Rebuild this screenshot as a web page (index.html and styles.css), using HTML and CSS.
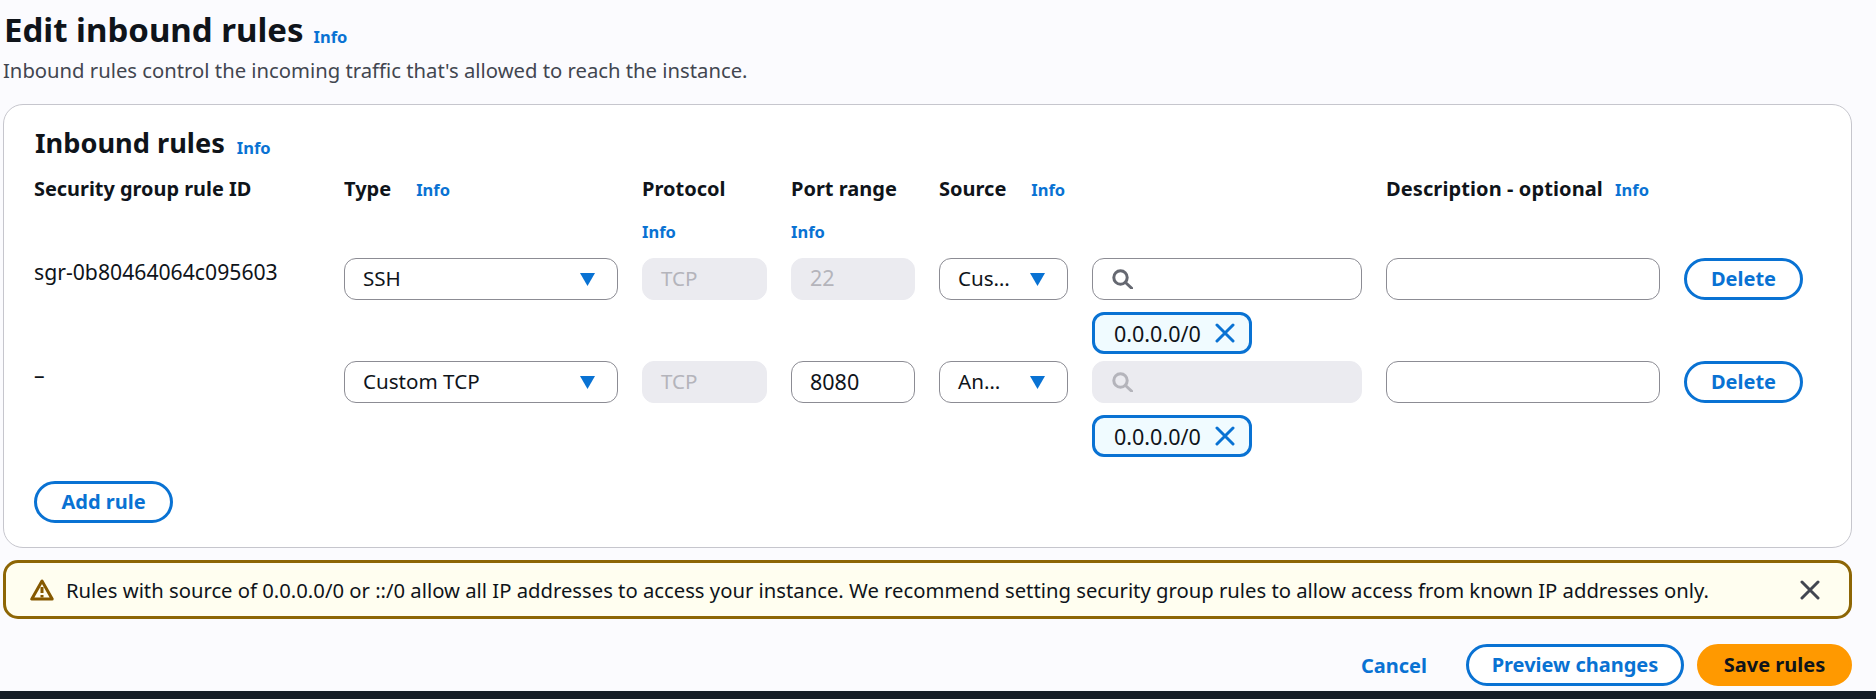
FILE: index.html
```html
<!DOCTYPE html>
<html lang="en">
<head>
<meta charset="utf-8">
<title>Edit inbound rules</title>
<link rel="stylesheet" href="styles.css">
</head>
<body>
<div class="page">
  <header class="page-head">
    <div class="title-row"><h1 class="title">Edit inbound rules</h1><a class="info info-title">Info</a></div>
    <p class="subtitle">Inbound rules control the incoming traffic that's allowed to reach the instance.</p>
  </header>

  <section class="card">
    <div class="card-head"><h2 class="card-title">Inbound rules</h2><a class="info info-card">Info</a></div>

    <div class="grid grid-head">
      <div class="label label-first">Security group rule ID</div>
      <div class="label label-wide"><span>Type</span><a class="info">Info</a></div>
      <div class="label"><span>Protocol</span><a class="info">Info</a></div>
      <div class="label"><span>Port range</span><a class="info">Info</a></div>
      <div class="label label-wide"><span>Source</span><a class="info">Info</a></div>
      <div></div>
      <div class="label label-narrow"><span>Description - optional</span><a class="info">Info</a></div>
      <div></div>
    </div>

    <div class="rows">
      <div class="grid">
        <div class="cell-text">sgr-0b80464064c095603</div>
        <div class="field select"><span class="field-text">SSH</span><svg class="caret" viewBox="0 0 14 12"><path d="M0 0h14L7 12z"/></svg></div>
        <div class="field disabled">TCP</div>
        <div class="field disabled num">22</div>
        <div class="field select"><span class="field-text">Cus…</span><svg class="caret" viewBox="0 0 14 12"><path d="M0 0h14L7 12z"/></svg></div>
        <div class="source">
          <div class="field search"><svg class="mag" viewBox="0 0 21 20"><circle cx="8.5" cy="8.5" r="6.7"/><path d="M13.5 13.5L20 19.5"/></svg></div>
          <div class="token"><span>0.0.0.0/0</span><svg class="x-blue" viewBox="0 0 20 20"><path d="M2 2l16 16M18 2L2 18"/></svg></div>
        </div>
        <div class="field"></div>
        <button class="btn">Delete</button>
      </div>

      <div class="grid">
        <div class="cell-text">–</div>
        <div class="field select"><span class="field-text">Custom TCP</span><svg class="caret" viewBox="0 0 14 12"><path d="M0 0h14L7 12z"/></svg></div>
        <div class="field disabled">TCP</div>
        <div class="field num">8080</div>
        <div class="field select"><span class="field-text">An…</span><svg class="caret" viewBox="0 0 14 12"><path d="M0 0h14L7 12z"/></svg></div>
        <div class="source">
          <div class="field search disabled"><svg class="mag" viewBox="0 0 21 20"><circle cx="8.5" cy="8.5" r="6.7"/><path d="M13.5 13.5L20 19.5"/></svg></div>
          <div class="token"><span>0.0.0.0/0</span><svg class="x-blue" viewBox="0 0 20 20"><path d="M2 2l16 16M18 2L2 18"/></svg></div>
        </div>
        <div class="field"></div>
        <button class="btn">Delete</button>
      </div>
    </div>

    <button class="btn btn-add">Add rule</button>
  </section>

  <div class="alert">
    <svg class="warn" viewBox="0 0 24 22"><path d="M12 2L1.8 20h20.4z"/><path d="M12 8v6M12 16v2.4"/></svg>
    <span class="alert-text">Rules with source of 0.0.0.0/0 or ::/0 allow all IP addresses to access your instance. We recommend setting security group rules to allow access from known IP addresses only.</span>
    <svg class="x-grey" viewBox="0 0 20 20"><path d="M2 2l16 16M18 2L2 18"/></svg>
  </div>

  <div class="actions">
    <a class="cancel">Cancel</a>
    <button class="btn btn-preview">Preview changes</button>
    <button class="btn btn-save">Save rules</button>
  </div>

  <div class="bottom-bar"></div>
</div>
</body>
</html>
```
FILE: styles.css
```css
* { box-sizing: border-box; }
html, body { margin: 0; padding: 0; }
body {
  background: #fbfbfe;
  color: #0f141a;
  font-family: "Noto Sans", "Liberation Sans", sans-serif;
  font-size: 20px;
  overflow: hidden;
}
.page { width: 1876px; height: 699px; display: flex; flex-direction: column; }

.page-head { padding: 10px 0 0 4px; height: 104px; }
.title-row { display: flex; align-items: flex-start; gap: 10px; height: 40px; }
.title { margin: 0; font-size: 33px; line-height: 40px; font-weight: 700; }
.subtitle { margin: 7px 0 0 -1px; font-size: 20.25px; line-height: 27px; color: #424650; }

.info { color: #0972d3; font-size: 16.5px; font-weight: 700; line-height: 24px; }
.info-title { margin-top: 15px; }
.info-card { margin-top: 11px; }

.card {
  margin-left: 3px;
  width: 1849px;
  height: 444px;
  padding: 20px 0 0 31px;
  background: #fff;
  border: 1px solid #c6c6cd;
  border-radius: 20px;
}
.card-head { display: flex; align-items: flex-start; gap: 12px; height: 36px; margin-bottom: 16px; }
.card-title { margin: 0; font-size: 27.2px; line-height: 36px; font-weight: 700; }

.grid {
  display: grid;
  grid-template-columns: 285px 274px 125px 124px 129px 270px 274px 119px;
  column-gap: 24px;
  align-items: start;
}
.grid-head { margin-bottom: 14px; }
.label {
  display: flex;
  flex-wrap: wrap;
  align-items: baseline;
  column-gap: 25px;
  row-gap: 19px;
  font-size: 20px;
  line-height: 24px;
  font-weight: 700;
}
.label-first { margin-left: -1px; font-size: 19.9px; }
.label-narrow { column-gap: 12px; flex-wrap: nowrap; letter-spacing: 0.005em; }

.rows { display: flex; flex-direction: column; gap: 7px; }
.cell-text { line-height: 28px; font-size: 21.2px; margin-left: -1px; }

.field {
  height: 42px;
  padding: 0 18px;
  display: flex;
  align-items: center;
  background: #fff;
  border: 1px solid #8c8c94;
  border-radius: 12px;
  font-size: 20.6px;
}
.field-text { margin-bottom: 2px; }
.field.num { font-size: 21.5px; padding-bottom: 2px; }
.field.disabled { background: #ebebf0; border-color: #ebebf0; color: #b4b4bb; padding-bottom: 3px; }
.select { justify-content: space-between; padding-right: 22px; }
.caret { width: 15px; height: 13px; fill: #0972d3; flex: none; }

.source { display: flex; flex-direction: column; gap: 12px; align-items: flex-start; }
.search, .search.disabled { width: 100%; padding-left: 19px; padding-bottom: 0; }
.mag { width: 21px; height: 20px; fill: none; stroke: #656871; stroke-width: 3; stroke-linecap: round; }
.search.disabled .mag { stroke: #b4b4bb; }

.token {
  width: 160px;
  height: 42px;
  padding: 0 14px 0 19px;
  display: flex;
  align-items: center;
  justify-content: space-between;
  background: #f0fbff;
  border: 3px solid #0972d3;
  border-radius: 12px;
  font-size: 21.5px;
}
.x-blue { width: 20px; height: 20px; flex: none; fill: none; stroke: #0972d3; stroke-width: 3; stroke-linecap: round; }

.btn {
  height: 42px;
  padding: 0 0 2px;
  background: #fff;
  border: 3px solid #0972d3;
  border-radius: 21px;
  color: #0972d3;
  font-family: inherit;
  font-size: 20px;
  font-weight: 700;
}
.btn-add { display: block; width: 139px; margin: 24px 0 0 -1px; }

.alert {
  margin: 12px 0 0 3px;
  width: 1849px;
  height: 59px;
  padding: 0 29px 0 24px;
  display: flex;
  align-items: center;
  background: #fffef0;
  border: 3px solid #8d6605;
  border-radius: 15px;
}
.warn { width: 24px; height: 22px; flex: none; fill: none; stroke: #855900; stroke-width: 3; stroke-linejoin: round; }
.alert-text { margin-left: 12px; flex: 1; font-size: 20.25px; white-space: nowrap; }
.x-grey { width: 20px; height: 20px; flex: none; fill: none; stroke: #424650; stroke-width: 3; stroke-linecap: round; }

.actions {
  margin: 25px 0 0 3px;
  width: 1849px;
  display: flex;
  justify-content: flex-end;
  align-items: center;
}
.cancel { color: #0972d3; font-weight: 700; margin-right: 39px; }
.btn-preview { width: 218px; margin-right: 13px; }
.btn-save { width: 155px; background: #ff9900; border-color: #ff9900; color: #0f141a; }

.bottom-bar { margin-top: 5px; height: 8px; background: #161d26; }
```
